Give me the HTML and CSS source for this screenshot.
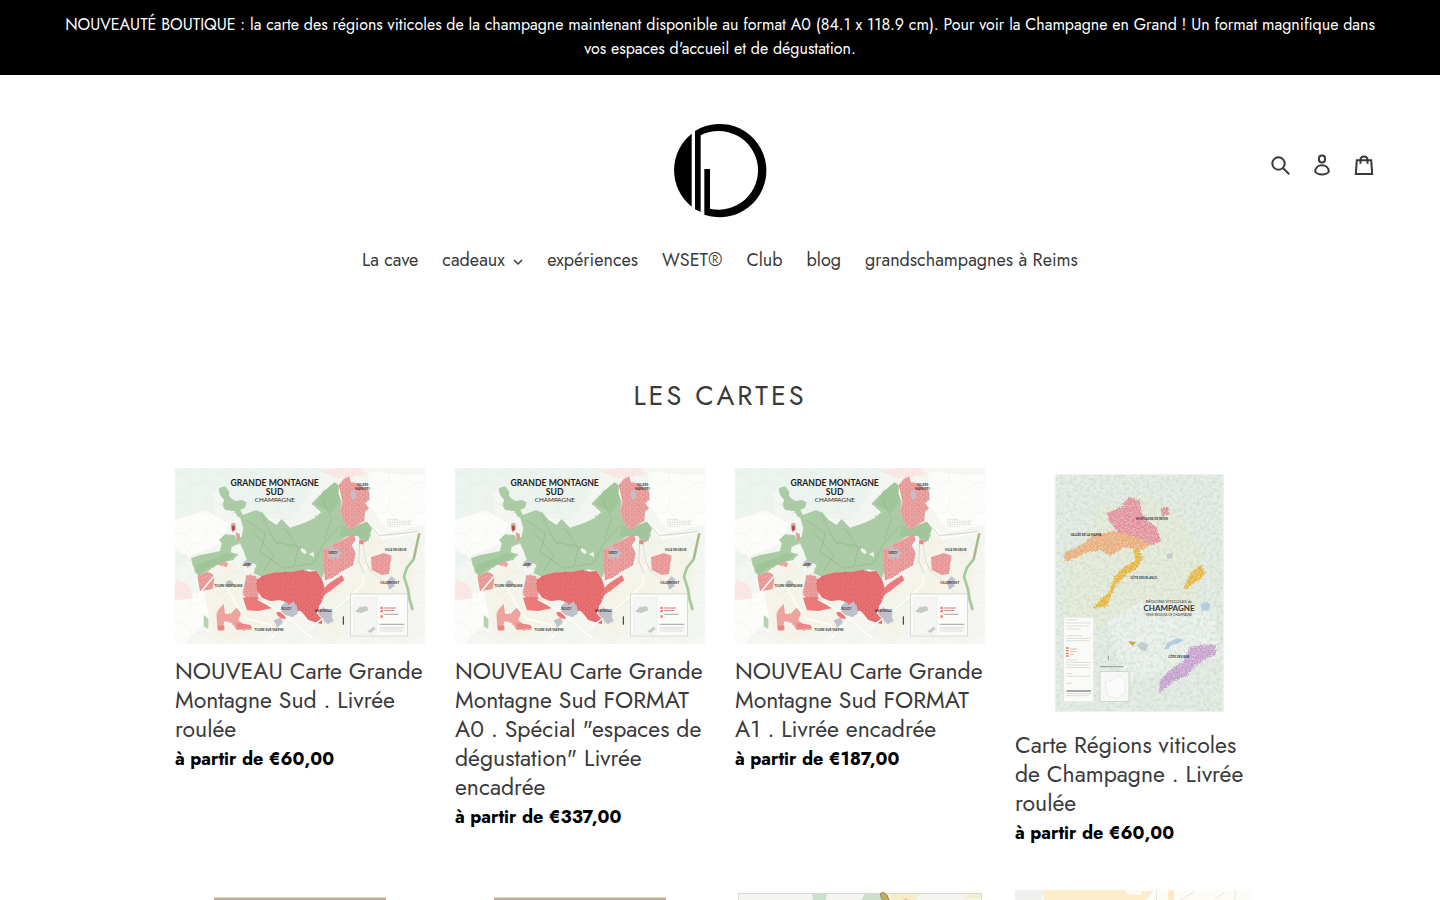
FILE: index.html
```html
<!DOCTYPE html>
<html lang="fr">
<head>
    <meta charset="utf-8">
    <meta name="viewport" content="width=device-width, initial-scale=1">
    <title>Les cartes</title>
    <link rel="stylesheet" href="styles.css">
</head>
<body>
    <!-- Shared map drawing -->
    <svg class="defs" width="0" height="0" aria-hidden="true">
        <defs>
            <pattern id="vines" width="17" height="15" patternUnits="userSpaceOnUse">
                <path d="M1 3l4-2M8 2l3 4M15 6l-3 3M3 9l3 3M9 13l4-2M1 14l2-2" stroke="#a63f49" stroke-width="1.600" opacity=".6"/>
            </pattern>
            <pattern id="roads" width="110" height="90" patternUnits="userSpaceOnUse">
                <path d="M0 20l30 8 20 30 40-8 20 14M30 28l28-28M50 58l-18 32M90 50l6-50M0 70l32 20" fill="none" stroke="#8a9a8a" stroke-width="1" opacity=".2"/>
            </pattern>
            <filter id="relief" x="0" y="0" width="100%" height="100%">
                <feTurbulence type="fractalNoise" baseFrequency=".1" numOctaves="4" seed="4"/>
                <feColorMatrix values="0 0 0 0 .42  0 0 0 0 .56  0 0 0 0 .48  0 2.4 0 0 -.95"/>
            </filter>
            <filter id="rough" x="-5%" y="-5%" width="110%" height="110%">
                <feTurbulence type="fractalNoise" baseFrequency=".2" numOctaves="3" seed="9" result="n"/>
                <feDisplacementMap in="SourceGraphic" in2="n" scale="14" xChannelSelector="R" yChannelSelector="G" result="d"/>
                <feColorMatrix in="n" values="0 0 0 0 0  0 0 0 0 0  0 0 0 0 0  -5 0 0 0 3.200" result="m"/>
                <feComposite in="d" in2="m" operator="in" result="spots"/>
                <feComponentTransfer in="d" result="soft"><feFuncA type="linear" slope=".55"/></feComponentTransfer>
                <feMerge><feMergeNode in="soft"/><feMergeNode in="spots"/></feMerge>
            </filter>
            <filter id="edge" x="-5%" y="-5%" width="110%" height="110%">
                <feTurbulence type="fractalNoise" baseFrequency=".12" numOctaves="2" seed="3" result="n"/>
                <feDisplacementMap in="SourceGraphic" in2="n" scale="6" xChannelSelector="R" yChannelSelector="G"/>
            </filter>
            <symbol id="montagne" viewBox="0 9 750 528">
                <rect y="9" width="750" height="528" fill="#f4f6f1"/>
                <path d="M0 9h440l-30 70-60 90-150-30-50-70-40 10 20 120-90 70-40 60z" fill="#edf3ee"/>
                <path d="M0 165l90-30 70 40-20 60-100 40-40-20zM580 20l170 10v150l-110 20-60-80zM0 390l110-10 10 60-90 97H0z" fill="#fcfcfb"/>
                <path d="M430 15l60-6h70l10 22-80 10zM0 345l40 14 15 40-55 8z" fill="#fae7e6"/>
                <path d="M210 350l-30-60-60 20-30 70 20 130 70 20 120-35 40-30zM450 400l90-90 20-90 40 0 90 30 30 50-10 130-30 60-150-20-50 60-60-20z" fill="#f5f4ea"/>
                <rect y="9" width="750" height="528" fill="url(#roads)"/>
                <!-- forest -->
                <g filter="url(#edge)">
                    <path d="M131 70L150 64L163 80L162 95L180 108L200 105L214 112L212 125L196 135L204 150L240 136L262 142L280 165L305 180L320 162L345 188L385 175L418 160L438 142L410 115L440 85L478 52L490 60L492 90L500 110L495 140L510 170L520 190L550 180L575 170L590 190L580 225L560 240L550 212L520 212L480 235L452 250L445 280L448 320L440 340L425 318L400 313L340 322L300 322L260 335L235 325L245 300L215 285L205 255L195 235L170 245L168 262L190 268L175 285L150 290L125 300L100 318L75 335L60 322L48 280L75 270L120 262L135 258L140 235L132 225L150 208L178 210L186 222L200 215L205 190L196 160L185 150L178 138L150 134L142 120L148 105L135 90z" fill="#aacba4"/>
                    <path d="M500 180l20 10 40-14 16-6 14 20-10 40-20-12-14-6-50 4zM440 85l38-33 12 8 2 50-20 30-50-20zM60 300l60-20 40-16 20 6-30 22-50 16-30 22z" fill="#9ac292" opacity=".6"/>
                    <path d="M216 165l55 40-15 55 70 50 90-15 30-60 45-50M235 200l60 70-30 50M330 190l40 60-15 60M440 100l30 60-20 60M260 150l40 80 90 20" fill="none" stroke="#7fa780" stroke-width="3" opacity=".4"/>
                    <path d="M376 256l6-8 14 14-7 6zM402 268l14-8 1 16z" fill="#f3f5ee"/>
                </g>
                <path d="M168 176l12-3 3 20-11 10zM182 202l12 4 2 18-10 4z" fill="#d9a29d"/>
                <path d="M170 182h9v14h-9z" fill="#b04c46"/>
                <!-- vineyards -->
                <g filter="url(#edge)">
                    <path d="M490 62L506 42L522 34L528 52L546 54L582 78L584 104L570 114L582 130L570 140L568 168L546 180L528 196L512 180L495 140L502 110L494 72z" fill="#eda5a4"/>
                    <path d="M445 255L470 240L500 225L520 215L536 208L542 225L530 240L542 265L535 300L500 320L470 340L450 345L445 300z" fill="#eea3a2"/>
                    <path d="M208 360L214 330L242 332L252 354L248 402L214 402L202 384z" fill="#eea2a0"/>
                    <path d="M245 345L262 332L300 322L350 320L385 314L400 320L425 318L442 345L452 380L440 410L432 425L425 445L442 465L440 478L400 465L380 440L350 425L320 405L285 408L262 398L245 375z" fill="#ea7172"/>
                    <path d="M204 398L245 396L290 430L250 438L216 436zM452 362L500 330L508 345L470 375L435 398zM303 443l20-6 12 12-6 14-18-6z" fill="#ec7a7a"/>
                    <path d="M588 276l38-12 24 8-8 54-22 4-30-16z" fill="#efa3a1"/>
                    <path d="M67 332l34-12 18 14-6 38-38 7zM128 300l14-10 17 3-3 13zM124 446l8-14 14-16 4 30 16 2 18-20 14 16-8 22 14 10 24 4 2 14-46 1-12-20-24-8-6 30-14-1z" fill="#efa39e"/>
                    <path d="M128 482h20v14h-18zM184 474l20 2 24 6 2 8-44 2zM552 226l22 2-8 10-14-2z" fill="#e98683"/>
                    <path d="M490 62L506 42L522 34L528 52L546 54L582 78L584 104L570 114L582 130L570 140L568 168L546 180L528 196L512 180L495 140L502 110L494 72zM445 255L470 240L500 225L520 215L536 208L542 225L530 240L542 265L535 300L500 320L470 340L450 345L445 300zM208 360L214 330L242 332L262 332L300 322L350 320L385 314L425 318L442 345L452 380L440 410L432 425L425 445L442 465L440 478L400 465L380 440L350 425L320 405L285 408L250 400L214 402zM588 276l38-12 24 8-8 54-22 4-30-16zM67 332l34-12 18 14-6 38-38 7z" fill="url(#vines)"/>
                </g>
                <path d="M248 403l68 36 94 80M340 460l-60 70M568 230l4 70-10 60-90 80-70 50M590 322l44 32 60 68M582 170l45 48 104-16M100 500l-30-110 50-60M150 360l60 100 80 20" fill="none" stroke="#fffef9" stroke-width="4"/>
                <path d="M562 200l10 90 14 28 50 38 55 66M575 172l40 40 112-12M554 210l-2 80 18 38" fill="none" stroke="#b6bab2" stroke-width="1.500"/>
                <path d="M733 205l-17 78-21 26-8 26 12 38 4 28 10 34" fill="none" stroke="#a5c99d" stroke-width="8"/>
                <path d="M733 205l-17 75" stroke="#b8ad88" stroke-width="4"/>
                <path d="M86 450l14 12v30l-14-8z" fill="#b5d3ad"/>
                <!-- villages -->
                <path d="M318 424l14-14 10 8 14-8 10 16 2 20-16 10-24-8zM428 444l16-18 14 10 16 4-4 14 6 14-18 10-14-14zM296 466l20-8 8 14-18 16zM462 250l12-8 4 10 12-5-2 10 14 8-10 6 2 10-14-6-6 14-4-14-12 2 4-12zM526 82l12-8 6 20-12 12zM636 350l12-16 12 8-2 22-16 10zM206 290l14-8 12 14-14 14zM152 350l14-6 10 16-18 8z" fill="#bfc0ca" filter="url(#edge)"/>
                <g class="map-names">
                    <text x="216" y="302">JARRY</text>
                    <text x="160" y="366">TOURS MONTAGNE</text>
                    <text x="474" y="266">VERZY</text>
                    <text x="334" y="435">BOUZY</text>
                    <text x="446" y="442">AMBONNAY</text>
                    <text x="282" y="498">TOURS-SUR-MARNE</text>
                    <text x="662" y="258">VILLE EN SELVE</text>
                    <text x="644" y="358">VILLERMONT</text>
                    <text x="563" y="62">VILLERS</text>
                    <text x="563" y="75">MARMERY</text>
                </g>
                <path d="M636 163h34M636 168h76M636 173h70M636 178h74M636 184h40M558 399h60" stroke="#888" stroke-width="1.500" stroke-dasharray="5 2" opacity=".5"/>
                <!-- legend -->
                <rect x="527" y="387" width="171" height="126" fill="#fbfcfa" stroke="#c7c9c6" stroke-width="2"/>
                <rect x="535" y="397" width="70" height="110" fill="#f4f6f3" stroke="#ddd"/>
                <path d="M540 440l14-14 22-2 4 12-22 8zM576 500l20-15 6 6-14 12z" fill="#c6cac7"/>
                <path d="M616 425h8v7h-8zM616 435h8v7h-8zM616 451h8v7h-8z" fill="#ed8684"/>
                <path d="M628 429h35M628 437h30" stroke="#df7775" stroke-width="3"/>
                <path d="M628 448h42M614 478h74" stroke="#777" stroke-width="2"/>
                <path d="M614 487h74M614 492h70M614 498h72" stroke="#aaa" stroke-width="1"/>
                <path d="M505 454v25" stroke="#222" stroke-width="3"/>
                <g class="map-title">
                    <text x="299" y="63">GRANDE MONTAGNE</text>
                    <text x="299" y="91">SUD</text>
                    <text class="light" x="299" y="111">CHAMPAGNE</text>
                </g>
            </symbol>
        </defs>
    </svg>

    <div class="announcement">
        <p>NOUVEAUTÉ BOUTIQUE : la carte des régions viticoles de la champagne maintenant disponible au format A0 (84.1 x 118.9 cm). Pour voir la Champagne en Grand ! Un format magnifique dans vos espaces d'accueil et de dégustation.</p>
    </div>

    <header class="site-header">
        <div class="header-top">
            <a class="logo" href="#" aria-label="Accueil">
                <svg viewBox="0 0 300 300" width="100" height="100">
                    <path d="M65 41A140 140 0 0 0 65 260z"/>
                    <path d="M75 33A140 140 0 1 1 103 284V147h17v119A118 118 0 1 0 92 46V276L75 268z"/>
                </svg>
            </a>
            <div class="header-icons">
                <button type="button" aria-label="Recherche">
                    <svg viewBox="0 0 22 22" width="22" height="22"><circle cx="9.500" cy="9.500" r="6.200"/><path d="M14.200 14.200l6 6"/></svg>
                </button>
                <a href="#" aria-label="Se connecter">
                    <svg viewBox="0 0 22 22" width="22" height="22"><rect x="8" y="1.500" width="6" height="7" rx="2.800"/><path d="M4.200 17.800c0-4 3-6.600 6.800-6.600s6.800 2.600 6.800 6.600c-1.500 2.200-3.800 2.700-6.800 2.700s-5.300-.5-6.800-2.700z"/></svg>
                </a>
                <a href="#" aria-label="Panier">
                    <svg viewBox="0 0 22 22" width="22" height="22"><path d="M3.800 6.300h14.400l1 13.700H2.800zM7.500 9.800V6c0-2 1.500-3.500 3.500-3.500s3.500 1.500 3.500 3.500v3.800"/></svg>
                </a>
            </div>
        </div>
        <nav class="site-nav">
            <a href="#">La cave</a>
            <button type="button">cadeaux <svg viewBox="0 0 10 10" width="10" height="10"><path d="M1 4l4 4 4-4"/></svg></button>
            <a href="#">expériences</a>
            <a href="#">WSET®</a>
            <a href="#">Club</a>
            <a href="#">blog</a>
            <a href="#">grandschampagnes à Reims</a>
        </nav>
    </header>

    <main class="collection">
        <h1>Les cartes</h1>
        <div class="products">
            <a class="product" href="#">
                <svg viewBox="0 0 250 176"><use href="#montagne" width="250" height="176"/></svg>
                <h2>NOUVEAU Carte Grande Montagne Sud . Livrée roulée</h2>
                <p class="price">à partir de €60,00</p>
            </a>
            <a class="product" href="#">
                <svg viewBox="0 0 250 176"><use href="#montagne" width="250" height="176"/></svg>
                <h2>NOUVEAU Carte Grande Montagne Sud FORMAT A0 . Spécial "espaces de dégustation" Livrée encadrée</h2>
                <p class="price">à partir de €337,00</p>
            </a>
            <a class="product" href="#">
                <svg viewBox="0 0 250 176"><use href="#montagne" width="250" height="176"/></svg>
                <h2>NOUVEAU Carte Grande Montagne Sud FORMAT A1 . Livrée encadrée</h2>
                <p class="price">à partir de €187,00</p>
            </a>
            <a class="product" href="#">
                <svg viewBox="-75 9 750 750">
                    <rect x="44" y="27" width="508" height="714" rx="5" fill="#edf0ed"/>
                    <rect x="49" y="31" width="498" height="706" fill="#e5ede5"/>
                    <path d="M180 130l140-40 90 60 80 120-20 150-150 60-180 10-70-60 10-130z" fill="#e8eddb"/>
                    <path d="M200 470l120-70 200 40 20 140-120 30-160 40z" fill="#edf2ec"/>
                    <rect x="49" y="31" width="498" height="706" filter="url(#relief)" opacity=".35"/>
                    <rect x="49" y="31" width="498" height="706" fill="url(#roads)"/>
                    <g filter="url(#rough)">
                        <path d="M202 145l42-20 22-30 34 12 4 36 20 26 26 18 12 40-26 14-36-14-40-4-30-26-22-28zM362 130l22-6 2 22-20 8z" fill="#e58f9c"/>
                        <path d="M70 265l50-23 40-32 60-12 60 14 50 26-20 16-60-8-40 26-30-18-40 8-36 18-28 8z" fill="#ecac7c"/>
                        <path d="M280 254l16-6 12 34-18 26-30 20-30 30-18 34-10 32-44 6 26-30 20-16 20-50 30-30 32-16zM430 370l24-50 32-20 10 26-30 26-28 20z" fill="#e8b440"/>
                        <path d="M450 545l76-8 2 32-32 14-30 18-24 30-40 18-46 36 4-40 30-30 40-26z" fill="#c79ecf"/>
                    </g>
                    <path d="M372 553l10-20 30-14 18 6-14 10-20 4-14 14zM482 420l14-10 16 8-6 18-20 2z" fill="#b3cede"/>
                    <path d="M264 529l25 2-12 12z" fill="#cfa54a"/>
                    <path d="M290 540l16-10 20 10-10 20-16-8zM378 268l18-4 2 14-14 4z" fill="#c5ccd0"/>
                    <g class="map-names">
                        <text x="336" y="164">MONTAGNE DE REIMS</text>
                        <text x="138" y="212">VALLÉE DE LA MARNE</text>
                        <text x="311" y="343">CÔTE DES BLANCS</text>
                        <text x="416" y="580">CÔTE DES BAR</text>
                    </g>
                    <g class="poster-title">
                        <text class="small" x="387" y="414">RÉGIONS VITICOLES de</text>
                        <text x="387" y="439">CHAMPAGNE</text>
                        <text class="tiny" x="387" y="453">WINE REGIONS OF CHAMPAGNE</text>
                    </g>
                    <rect x="71" y="457" width="90" height="253" fill="#fafbf9" stroke="#d4dad3"/>
                    <path d="M78 464h36M78 474h75M78 483h70M78 492h45M78 512h50M78 520h74M78 527h70M78 585h34M78 592h74M78 600h70M78 608h74M78 626h20M78 634h72M78 655h20M78 686h76M78 692h68" stroke="#a5aaa5" stroke-width="1.500" opacity=".7"/>
                    <path d="M78 549h8M78 557h8M78 565h8M78 573h8" stroke="#d97a4c" stroke-width="4"/>
                    <path d="M90 552h22M90 560h20M90 568h12" stroke="#c99a80" stroke-width="2"/>
                    <path d="M80 678h73" stroke="#555" stroke-width="3"/>
                    <rect x="180" y="620" width="87" height="90" fill="#f5f8f4" stroke="#c3c9c3" stroke-width="2"/>
                    <path d="M196 650l20-4 18-16 22 16-2 42-24 12-28-8z" fill="#fafbfa" stroke="#cbd1cc"/>
                    <path d="M205 572v14M180 605h70" stroke="#6c726c" stroke-width="2"/>
                </svg>
                <h2>Carte Régions viticoles de Champagne . Livrée roulée</h2>
                <p class="price">à partir de €60,00</p>
            </a>
            <a class="product" href="#" aria-label="Carte encadrée">
                <svg viewBox="0 0 250 250"><rect x="39" y="7" width="172" height="236" fill="#c3aa9a"/><path d="M39 7.500h172" stroke="#e5d6c4"/><rect x="45" y="13" width="160" height="224" fill="#edf2ec"/></svg>
            </a>
            <a class="product" href="#" aria-label="Carte encadrée">
                <svg viewBox="0 0 250 250"><rect x="39" y="7" width="172" height="236" fill="#c3aa9a"/><path d="M39 7.500h172" stroke="#e5d6c4"/><rect x="45" y="13" width="160" height="224" fill="#edf2ec"/></svg>
            </a>
            <a class="product" href="#" aria-label="Carte">
                <svg viewBox="0 0 250 176">
                    <rect x="3.500" y="3.500" width="243" height="170" fill="#f4f5f1" stroke="#d6d9d6"/>
                    <path d="M77 4h15l-3 12H79zM130 4h18v12h-14l-8-6z" fill="#cce0cc"/>
                    <path d="M155 4h30l-8 12h-20zM232 4h14v4h-16z" fill="#f7edc8"/>
                    <path d="M145 4l3-2 4 3 4 10h-7z" fill="#c5ad55" stroke="#958b58"/>
                    <path d="M168 10l4-2 3 6h-7z" fill="#e6c69a"/>
                </svg>
            </a>
            <a class="product" href="#" aria-label="Carte">
                <svg viewBox="0 0 250 176">
                    <rect width="236" height="176" fill="#fdfcf7"/>
                    <path d="M0 0h30l-4 12H0z" fill="#f0f0ee"/>
                    <path d="M28 0h82l4 5h13V1h12l-9 10v165H40z" fill="#fdedcd"/>
                    <path d="M153 0h6v20h-6z" fill="#fceac6"/>
                    <path d="M141.500 0v176M165 10l14-8M200 9l10-7M220 0v14" stroke="#e5e7e2" fill="none"/>
                </svg>
            </a>
        </div>
    </main>
</body>
</html>
```
FILE: styles.css
```css
* {
    box-sizing: border-box;
}
body {
    margin: 0;
    background: #fff;
    color: #3a3a3a;
    font-family: Jost, Lato, sans-serif;
    font-size: 18px;
    line-height: 27px;
}
a {
    color: inherit;
    text-decoration: none;
}
button {
    padding: 0;
    border: 0;
    background: none;
    color: inherit;
    font: inherit;
    cursor: pointer;
}
.defs {
    position: absolute;
}

/* Announcement bar */
.announcement {
    padding: 13px 55px 14px;
    background: #000;
    color: #fff;
    font-size: 16px;
    line-height: 24px;
    text-align: center;
}
.announcement p {
    margin: 0;
}

/* Header */
.site-header {
    padding: 45px 55px 54px;
}
.header-top {
    display: grid;
    grid-template-columns: 1fr auto 1fr;
    align-items: center;
}
.logo {
    grid-column: 2;
    display: block;
}
.logo svg {
    display: block;
}
.header-icons {
    display: flex;
    justify-content: flex-end;
    gap: 20px;
    padding: 0 10px 10px 0;
}
.header-icons svg {
    display: block;
    fill: none;
    stroke: #3a3a3a;
    stroke-width: 2;
}
.site-nav {
    display: flex;
    flex-wrap: wrap;
    justify-content: center;
    gap: 24px;
    padding-top: 27px;
}
.site-nav svg {
    margin-left: 3px;
    fill: none;
    stroke: #3a3a3a;
    stroke-width: 1.5;
}

/* Collection */
.collection {
    max-width: 1200px;
    margin: 0 auto;
    padding: 50px 55px;
}
.collection h1 {
    margin: 0 0 54px;
    font-size: 27px;
    font-weight: 400;
    line-height: 36px;
    letter-spacing: 3px;
    text-align: center;
    text-transform: uppercase;
}
.products {
    display: grid;
    grid-template-columns: repeat(4, 1fr);
    gap: 43px 30px;
}
.product > svg {
    display: block;
    width: 100%;
    margin-bottom: 13px;
}
.product h2 {
    margin: 0 0 2px;
    font-size: 23px;
    font-weight: 400;
    line-height: 29px;
}
.price {
    margin: 0;
    color: #000;
    font-weight: 700;
}

/* Map lettering */
.map-names {
    fill: #333;
    font-family: Lato, sans-serif;
    font-size: 9px;
    font-weight: 700;
    text-anchor: middle;
}
.map-title {
    fill: #222;
    font-family: Lato, sans-serif;
    font-size: 26px;
    font-weight: 700;
    text-anchor: middle;
}
.map-title .light {
    font-size: 19px;
    font-weight: 400;
}
.poster-title {
    fill: #333;
    font-family: Lato, sans-serif;
    font-size: 24px;
    font-weight: 700;
    text-anchor: middle;
}
.poster-title .small {
    font-size: 13px;
    font-weight: 400;
}
.poster-title .tiny {
    font-size: 9px;
    font-weight: 400;
}
```
